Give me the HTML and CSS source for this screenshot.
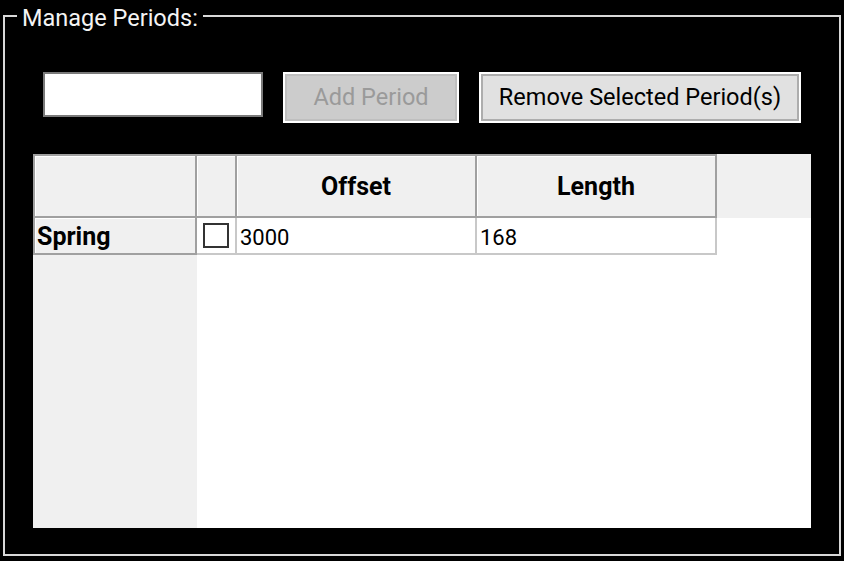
FILE: index.html
```html
<!DOCTYPE html>
<html lang="en">
<head>
<meta charset="utf-8">
<title>Manage Periods</title>
<link rel="stylesheet" href="styles.css">
</head>
<body>
<div class="frame">
  <span class="frame-title">Manage Periods:</span>
  <div class="toolbar">
    <input class="period-input" type="text" value="">
    <button class="btn btn-add" disabled>Add Period</button>
    <button class="btn btn-remove">Remove Selected Period(s)</button>
  </div>
  <div class="grid">
    <div class="head corner"></div>
    <div class="head"></div>
    <div class="head col-head">Offset</div>
    <div class="head col-head">Length</div>
    <div class="head-fill"></div>
    <div class="row-head">Spring</div>
    <div class="data chk-cell"><span class="checkbox"></span></div>
    <div class="data">3000</div>
    <div class="data">168</div>
    <div class="empty"></div>
    <div class="row-head-fill"></div>
  </div>
</div>
</body>
</html>
```
FILE: styles.css
```css
* { box-sizing: border-box; }
html, body { margin: 0; padding: 0; }
body {
  background: #000;
  width: 844px;
  height: 561px;
  overflow: hidden;
  font-family: Roboto, "Noto Sans", sans-serif;
}
.frame {
  position: relative;
  margin: 15px 0 0 3px;
  width: 838px;
  height: 541px;
  border: 2px solid #d9d9d9;
  padding: 55px 0 0 28px;
}
.frame-title {
  position: absolute;
  left: 12px;
  top: -13px;
  padding: 0 5px;
  background: #000;
  color: #f4f4f4;
  font-size: 23.5px;
  line-height: 28px;
  white-space: nowrap;
}
.toolbar {
  display: flex;
  align-items: flex-start;
  gap: 20px;
  margin-left: 10px;
}
.period-input {
  width: 220px;
  height: 45px;
  border: 2px solid #7a7a7a;
  background: #fff;
  padding: 0;
  margin: 0;
  outline: none;
  font: inherit;
}
.btn {
  appearance: none;
  height: 51px;
  border: 2px solid #fff;
  border-radius: 0;
  box-shadow: inset 0 0 0 2px #adadad;
  background: #e1e1e1;
  color: #000;
  font-family: inherit;
  font-size: 23.5px;
  padding: 0 0 2px;
  margin: 0;
  display: flex;
  align-items: center;
  justify-content: center;
  white-space: nowrap;
}
.btn-add {
  width: 176px;
  background: #cccccc;
  box-shadow: inset 0 0 0 2px #bfbfbf;
  color: #9a9a9a;
}
.btn-remove { width: 322px; }
.grid {
  margin-top: 31px;
  width: 778px;
  height: 374px;
  display: grid;
  grid-template-columns: 164px 40px 240px 240px 94px;
  grid-template-rows: 64px 37px 273px;
  background: #fff;
}
.head {
  background: #f0f0f0;
  border-top: 2px solid #a0a0a0;
  border-right: 2px solid #a0a0a0;
  border-bottom: 2px solid #a0a0a0;
  box-shadow: inset 1px 1px 0 #fff;
}
.corner { border-left: 2px solid #a0a0a0; }
.col-head {
  display: flex;
  align-items: center;
  justify-content: center;
  font-weight: 700;
  font-size: 25px;
  color: #000;
}
.head-fill { background: #f0f0f0; }
.row-head {
  background: #f0f0f0;
  border-left: 2px solid #a0a0a0;
  border-right: 2px solid #a0a0a0;
  border-bottom: 2px solid #a0a0a0;
  box-shadow: inset 1px 1px 0 #fff;
  font-weight: 700;
  font-size: 25px;
  color: #000;
  display: flex;
  align-items: center;
  padding: 2px 0 0 2px;
}
.data {
  border-right: 2px solid #c8c8c8;
  border-bottom: 2px solid #c8c8c8;
  font-size: 22px;
  color: #000;
  display: flex;
  align-items: center;
  padding: 3px 0 0 3px;
}
.chk-cell {
  justify-content: center;
  padding: 0;
}
.checkbox {
  width: 26px;
  height: 25px;
  border: 2px solid #333;
  background: #fff;
}
.row-head-fill { background: #f0f0f0; }
```
